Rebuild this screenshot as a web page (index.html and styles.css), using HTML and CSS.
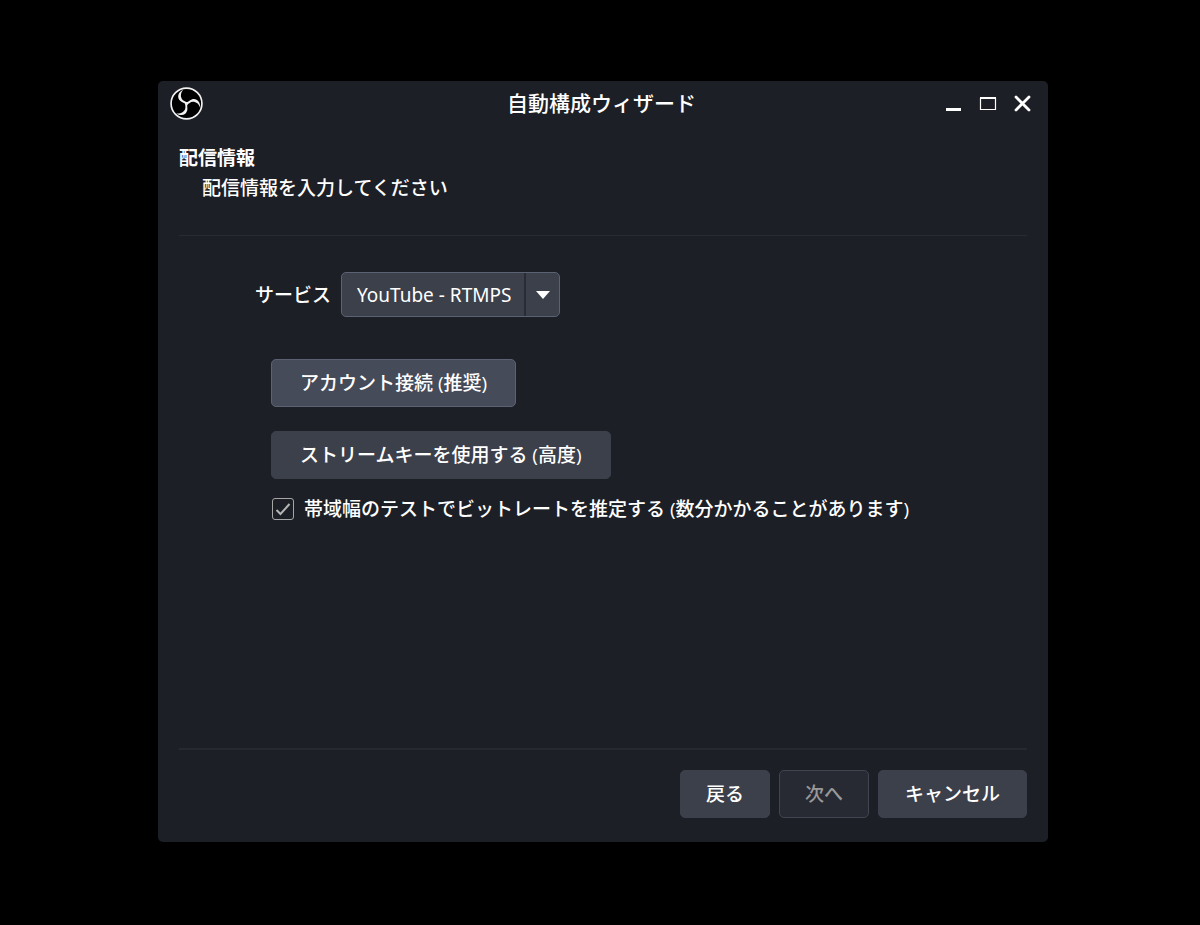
FILE: index.html
```html
<!DOCTYPE html>
<html lang="ja">
<head>
<meta charset="utf-8">
<meta name="viewport" content="width=device-width, initial-scale=1">
<title>自動構成ウィザード</title>
<link rel="stylesheet" href="styles.css">
</head>
<body class="desktop">
<main class="dialog">
  <header class="titlebar">
    <svg class="logo" viewBox="0 0 34 34" aria-hidden="true">
      <circle cx="17" cy="17" r="15.9" fill="#000" stroke="#f2f2f2" stroke-width="1.7"/>
      <g id="blade" fill="#f2f2f2">
        <path d="M13.8 2.6C8 5.4 6.8 11.2 10.8 14.4C12.8 16 15 16 16.6 18.2L17.8 16C15.8 14.4 13.6 14.6 12.2 12.3C10.4 9.2 11 5.5 13.8 2.6Z"/>
      </g>
      <use href="#blade" transform="rotate(120 17 17)"/>
      <use href="#blade" transform="rotate(240 17 17)"/>
      <circle cx="17" cy="17" r="1.5" fill="#f2f2f2"/>
    </svg>
    <h1 class="title">自動構成ウィザード</h1>
    <div class="window-controls">
      <button class="window-button" type="button" aria-label="最小化">
        <svg viewBox="0 0 18 18"><path d="M1 14h15v3H1z" fill="#fff"/></svg>
      </button>
      <button class="window-button" type="button" aria-label="最大化">
        <svg viewBox="0 0 18 18"><path d="M1.5 4v11.5h15V4" fill="none" stroke="#fff" stroke-width="1.2"/><path d="M1 3h16v2H1z" fill="#fff"/></svg>
      </button>
      <button class="window-button" type="button" aria-label="閉じる">
        <svg viewBox="0 0 18 18"><path d="M3 3l13 13M16 3L3 16" fill="none" stroke="#fff" stroke-width="2.8" stroke-linecap="round"/></svg>
      </button>
    </div>
  </header>

  <section class="intro">
    <h2 class="heading">配信情報</h2>
    <p class="subheading">配信情報を入力してください</p>
  </section>

  <form class="form">
    <div class="service">
      <label for="service">サービス</label>
      <span class="select-box">
        <select class="select" id="service"><option>YouTube - RTMPS</option></select>
        <svg class="arrow" viewBox="0 0 16 8" aria-hidden="true"><path d="M1 0h14L8 8z" fill="#fff"/></svg>
      </span>
    </div>
    <div class="options">
      <button class="button button-wide button-focus" type="button">アカウント接続 (推奨)</button>
      <button class="button button-wide" type="button">ストリームキーを使用する (高度)</button>
    </div>
    <label class="check"><input class="checkbox" type="checkbox" checked>帯域幅のテストでビットレートを推定する (数分かかることがあります)</label>
  </form>

  <footer class="footer">
    <button class="button" type="button">戻る</button>
    <button class="button" type="button" disabled>次へ</button>
    <button class="button button-cancel" type="button">キャンセル</button>
  </footer>
</main>
</body>
</html>
```
FILE: styles.css
```css
* {
  box-sizing: border-box;
}

.desktop {
  display: flex;
  min-height: 100vh;
  margin: 0;
  padding: 81px 152px 83px 158px;
  background: #000;
  color: #fff;
  font: 500 19px/30px "Open Sans", "Noto Sans CJK JP", sans-serif;
}

.dialog {
  display: flex;
  flex: 1;
  flex-direction: column;
  padding: 0 21px 24px;
  border-radius: 5px;
  background: #1d1f26;
}

.titlebar {
  display: grid;
  grid-template-columns: 1fr auto 1fr;
  align-items: center;
  height: 45px;
  margin: 0 -6px 0 -9px;
}

.logo {
  width: 33px;
  height: 33px;
}

.title {
  margin: 0;
  padding-bottom: 2px;
  font-size: 21px;
  font-weight: 500;
}

.window-controls {
  display: flex;
  justify-content: flex-end;
  gap: 16px;
  padding: 0 2px 2px 0;
}

.window-button {
  display: flex;
  padding: 0;
  border: 0;
  background: none;
}

.window-button svg {
  width: 18px;
  height: 18px;
}

.intro {
  padding: 17px 0 32px;
  border-bottom: 1px solid #292b33;
}

.heading {
  margin: 0;
  font-size: 19px;
  font-weight: 700;
}

.subheading {
  margin: 0;
  padding-left: 23px;
}

.form {
  flex: 1;
  padding: 36px 76px 0;
}

.service {
  display: flex;
  align-items: center;
  gap: 10px;
}

.select-box {
  display: grid;
  align-items: center;
}

.select {
  grid-area: 1 / 1;
  width: 219px;
  height: 45px;
  padding: 0 36px 0 15px;
  appearance: none;
  border: 1px solid #5b6273;
  border-radius: 5px;
  background: linear-gradient(#292b36, #292b36) right 33px top / 2px 100% no-repeat #3c404b;
  color: #fff;
  font: inherit;
  font-family: "Noto Sans", "Noto Sans CJK JP", sans-serif;
  font-weight: 400;
}

.arrow {
  grid-area: 1 / 1;
  justify-self: end;
  width: 16px;
  height: 8px;
  margin-right: 9px;
  pointer-events: none;
}

.options {
  display: flex;
  flex-direction: column;
  align-items: flex-start;
  gap: 24px;
  padding: 42px 0 15px 16px;
}

.button {
  height: 48px;
  padding: 0 25px;
  border: 1px solid #3c404b;
  border-radius: 5px;
  background: #3c404b;
  color: #fff;
  font: inherit;
}

.button-wide {
  padding: 0 28px;
}

.button-cancel {
  padding: 0 26px;
}

.button-focus {
  border-color: #5b6273;
  background: #464b59;
}

.button:disabled {
  border-color: #414550;
  background: #272a33;
  color: #999;
}

.check {
  display: flex;
  align-items: center;
  gap: 10px;
  padding-left: 17px;
}

.checkbox {
  width: 22px;
  height: 22px;
  margin: 0;
  appearance: none;
  border: 1px solid #a6a6a6;
  border-radius: 3px;
  background: url("data:image/svg+xml,%3Csvg xmlns='http://www.w3.org/2000/svg' viewBox='0 0 18 18'%3E%3Cpath d='M2.5 10l4 4L15.5 4' fill='none' stroke='%23b4b4b4' stroke-width='2'/%3E%3C/svg%3E") center / 18px no-repeat;
}

.footer {
  display: flex;
  justify-content: flex-end;
  gap: 9px;
  padding-top: 20px;
  border-top: 2px solid #272930;
}
```
